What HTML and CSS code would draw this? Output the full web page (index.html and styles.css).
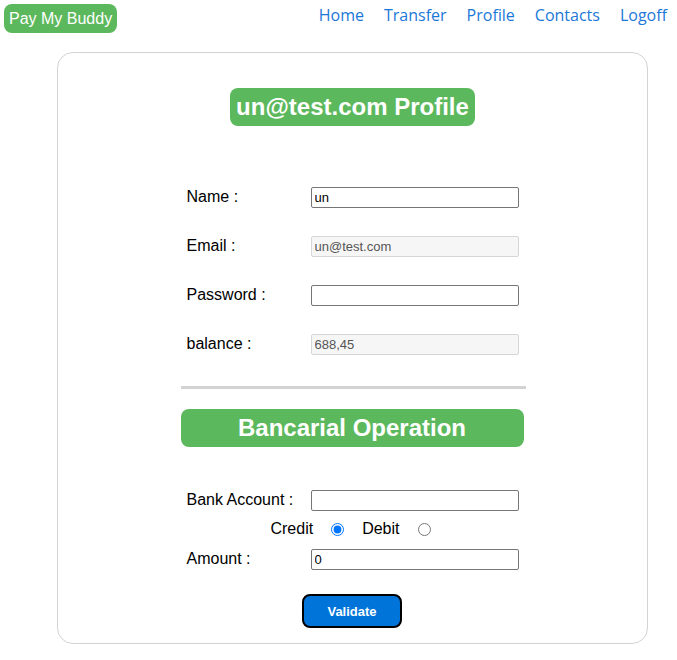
FILE: index.html
```html
<!DOCTYPE html>
<html>
<head>
<meta charset="utf-8">
<link rel="stylesheet" href="styles.css">
</head>
<body>
<header class="topbar">
  <div class="logo">Pay My Buddy</div>
  <nav class="nav">
    <a href="#">Home</a>
    <a href="#">Transfer</a>
    <a href="#">Profile</a>
    <a href="#">Contacts</a>
    <a href="#">Logoff</a>
  </nav>
</header>
<main class="card">
  <h1 class="title">un@test.com Profile</h1>
  <div class="section">
    <div class="form-grid">
      <label>Name :</label><input type="text" value="un">
      <label>Email :</label><input type="text" value="un@test.com" readonly class="ro">
      <label>Password :</label><input type="password" value="">
      <label>balance :</label><input type="text" value="688,45" readonly class="ro">
    </div>
    <div class="divider"></div>
    <h2 class="subtitle">Bancarial Operation</h2>
    <div class="bank-row"><label>Bank Account :</label><input type="text" value=""></div>
    <div class="radio-row">
      <span>Credit</span><input type="radio" name="op" checked>
      <span>Debit</span><input type="radio" name="op">
    </div>
    <div class="bank-row amount"><label>Amount :</label><input type="text" value="0"></div>
    <div class="actions"><button class="validate">Validate</button></div>
  </div>
</main>
</body>
</html>
```
FILE: styles.css
```css
html, body {
  margin: 0;
  padding: 0;
  background: #fff;
  font-family: "Liberation Sans", Arial, sans-serif;
}
.topbar {
  display: flex;
  justify-content: space-between;
  align-items: flex-start;
  padding: 4px 10px 0 4px;
  height: 48px;
  box-sizing: border-box;
}
.logo {
  background: #5cb85c;
  color: #fff;
  font-size: 16px;
  line-height: 29px;
  height: 29px;
  padding: 0 5px;
  border-radius: 8px;
}
.nav {
  display: flex;
  gap: 20px;
}
.nav a {
  font-family: "Open Sans", sans-serif;
  font-size: 16px;
  line-height: 22px;
  color: #1c78d8;
  text-decoration: none;
}
.card {
  box-sizing: border-box;
  width: 591px;
  margin: 4px 0 0 57px;
  border: 1px solid #d3d3d3;
  border-radius: 16px;
  padding: 35px 0 15px;
  display: flex;
  flex-direction: column;
  align-items: center;
}
.title {
  margin: 0;
  background: #5cb85c;
  color: #fff;
  font-size: 24px;
  font-weight: bold;
  line-height: 38px;
  padding: 0 6px;
  border-radius: 8px;
}
.section {
  width: 345px;
  margin-left: 1px;
  display: flex;
  flex-direction: column;
}
.form-grid {
  margin-top: 61px;
  padding-left: 6px;
  display: grid;
  grid-template-columns: 124px 208px;
  grid-auto-rows: 21px;
  row-gap: 28px;
  align-items: center;
}
label {
  font-size: 16px;
  color: #000;
  margin-top: -1px;
}
input[type="text"], input[type="password"] {
  box-sizing: border-box;
  width: 208px;
  height: 21px;
  margin: 0;
  padding: 1px 3px;
  font-family: "Liberation Sans", Arial, sans-serif;
  font-size: 13px;
  border: 1px solid #767676;
  border-radius: 2px;
  color: #000;
  background: #fff;
}
input.ro {
  background: #f6f6f6;
  border-color: #d6d6d6;
  color: #555;
}
.divider {
  margin-top: 31px;
  height: 3px;
  background: #d3d3d3;
}
.subtitle {
  margin: 20px 2px 0 0;
  background: #5cb85c;
  color: #fff;
  font-size: 24px;
  font-weight: bold;
  line-height: 38px;
  text-align: center;
  border-radius: 8px;
}
.bank-row {
  margin-top: 43px;
  padding-left: 6px;
  display: grid;
  grid-template-columns: 124px 208px;
  height: 21px;
  align-items: center;
}
.bank-row.amount {
  margin-top: 11px;
}
.radio-row {
  margin-top: 9px;
  height: 18px;
  display: flex;
  justify-content: center;
  align-items: center;
  font-size: 16px;
  padding-right: 5px;
}
.radio-row span {
  margin-right: 18px;
}
.radio-row input {
  margin: 1px 18px 0 0;
  width: 13px;
  height: 13px;
}
.radio-row input:last-child {
  margin-right: 0;
}
.actions {
  margin-top: 24px;
  display: flex;
  justify-content: center;
  padding-right: 2px;
}
.validate {
  width: 100px;
  height: 34px;
  background: #0074d9;
  color: #fff;
  font-family: "Liberation Sans", Arial, sans-serif;
  font-weight: bold;
  font-size: 13px;
  border: 2px solid #000;
  border-radius: 8px;
}
```
